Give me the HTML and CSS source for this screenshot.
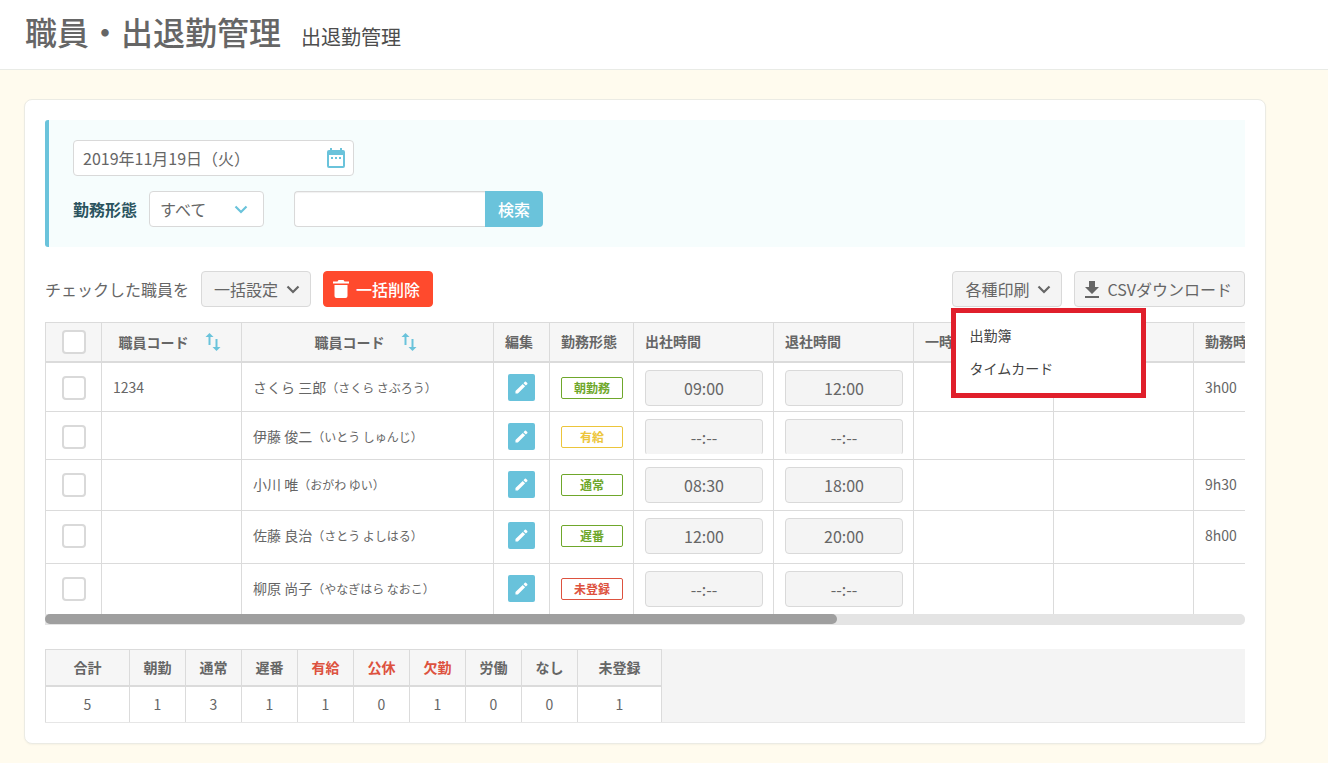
FILE: index.html
```html
<!DOCTYPE html>
<html lang="ja">
<head>
<meta charset="utf-8">
<title>職員・出退勤管理</title>
<link rel="stylesheet" href="styles.css">
</head>
<body>
<svg class="sprite" aria-hidden="true">
  <symbol id="chevron" viewBox="0 0 14 9"><path d="M1.500 1.500l5.500 5.500 5.500-5.500" fill="none" stroke="currentColor" stroke-width="2.200"/></symbol>
  <symbol id="sort" viewBox="0 0 16 20"><path d="M4.500 1L8.500 5H5.500V13H3.500V5H.5zM11.500 19L7.500 15H10.500V7H12.500V15H15.500z" fill="currentColor"/></symbol>
  <symbol id="pencil" viewBox="0 0 14 14"><path d="M0.500 10.900L8.300 3.100L10.900 5.700L3.100 13.500H.5zM9.100 2.300L10.600.8Q11.200.2 11.800.8L13.200 2.200Q13.800 2.800 13.200 3.400L11.700 4.900z" fill="currentColor"/></symbol>
</svg>
<header class="page-header">
  <h1 class="page-title">職員・出退勤管理</h1>
  <p class="page-subtitle">出退勤管理</p>
</header>
<main class="card">
  <form class="filter">
    <div class="date-field">
      <input class="field date-input" type="text" value="2019年11月19日（火）" aria-label="日付">
      <svg class="calendar-icon" viewBox="0 0 18 20"><path d="M3 0h2v2h8V0h2v2h1q2 0 2 2v14q0 2-2 2H2q-2 0-2-2V4q0-2 2-2h1zM2 7v11h14V7zM4 9h2v2H4zm4 0h2v2H8zm4 0h2v2h-2z" fill="currentColor" fill-rule="evenodd"/></svg>
    </div>
    <div class="filter-row">
      <label class="filter-label" for="work-type">勤務形態</label>
      <div class="select-wrap">
        <select class="field work-select" id="work-type"><option>すべて</option></select>
        <svg class="select-icon"><use href="#chevron"/></svg>
      </div>
      <div class="search">
        <input class="field search-input" type="text" aria-label="検索語">
        <button class="search-button" type="button">検索</button>
      </div>
    </div>
  </form>

  <div class="toolbar">
    <span class="toolbar-text">チェックした職員を</span>
    <button class="button" type="button">一括設定<svg class="chevron"><use href="#chevron"/></svg></button>
    <button class="button button-danger" type="button"><svg class="trash" viewBox="0 0 16 18"><path d="M0 1.500h4.500L5.500 0h5l1 1.500H16v2H0zM1.500 5h13v11q0 2-2 2h-9q-2 0-2-2z" fill="currentColor"/></svg>一括削除</button>
    <div class="print">
      <button class="button" type="button" aria-expanded="true">各種印刷<svg class="chevron"><use href="#chevron"/></svg></button>
      <div class="menu">
        <a class="menu-item" href="#attendance">出勤簿</a>
        <a class="menu-item" href="#timecard">タイムカード</a>
      </div>
    </div>
    <button class="button button-csv" type="button"><svg class="download" viewBox="0 0 14 17"><path d="M4 0h6v6h4l-7 7-7-7h4zM0 15h14v2H0z" fill="currentColor"/></svg>CSVダウンロード</button>
  </div>

  <div class="table-scroll">
    <table class="staff">
      <colgroup>
        <col class="w-check"><col class="w-mid"><col class="w-name"><col class="w-edit"><col class="w-type"><col class="w-mid"><col class="w-mid"><col class="w-mid"><col class="w-mid"><col>
      </colgroup>
      <thead>
        <tr>
          <th class="center"><input class="check" type="checkbox" aria-label="すべて選択"></th>
          <th><div class="sortable">職員コード<svg class="sort"><use href="#sort"/></svg></div></th>
          <th><div class="sortable">職員コード<svg class="sort"><use href="#sort"/></svg></div></th>
          <th>編集</th><th>勤務形態</th><th>出社時間</th><th>退社時間</th><th>一時</th><th></th><th>勤務時間</th>
        </tr>
      </thead>
      <tbody>
        <tr class="row">
          <td><div class="cell middle"><input class="check" type="checkbox" aria-label="さくら 三郎を選択"></div></td>
          <td><div class="cell raised">1234</div></td>
          <td><div class="cell raised"><span>さくら 三郎<small class="kana">（さくら さぶろう）</small></span></div></td>
          <td><div class="cell middle raised"><button class="edit" type="button" aria-label="編集"><svg class="pencil"><use href="#pencil"/></svg></button></div></td>
          <td><div class="cell"><span class="badge green">朝勤務</span></div></td>
          <td><div class="cell"><input class="time" type="text" value="09:00" aria-label="出社時間"></div></td>
          <td><div class="cell"><input class="time" type="text" value="12:00" aria-label="退社時間"></div></td>
          <td></td><td></td>
          <td><div class="cell raised">3h00</div></td>
        </tr>
        <tr class="row row-short">
          <td><div class="cell middle"><input class="check" type="checkbox" aria-label="伊藤 俊二を選択"></div></td>
          <td></td>
          <td><div class="cell raised"><span>伊藤 俊二<small class="kana">（いとう しゅんじ）</small></span></div></td>
          <td><div class="cell middle raised"><button class="edit" type="button" aria-label="編集"><svg class="pencil"><use href="#pencil"/></svg></button></div></td>
          <td><div class="cell"><span class="badge yellow">有給</span></div></td>
          <td><div class="cell"><input class="time" type="text" value="--:--" aria-label="出社時間"></div></td>
          <td><div class="cell"><input class="time" type="text" value="--:--" aria-label="退社時間"></div></td>
          <td></td><td></td><td></td>
        </tr>
        <tr class="row row-tall">
          <td><div class="cell middle"><input class="check" type="checkbox" aria-label="小川 唯を選択"></div></td>
          <td></td>
          <td><div class="cell raised"><span>小川 唯<small class="kana">（おがわ ゆい）</small></span></div></td>
          <td><div class="cell middle raised"><button class="edit" type="button" aria-label="編集"><svg class="pencil"><use href="#pencil"/></svg></button></div></td>
          <td><div class="cell"><span class="badge green">通常</span></div></td>
          <td><div class="cell"><input class="time" type="text" value="08:30" aria-label="出社時間"></div></td>
          <td><div class="cell"><input class="time" type="text" value="18:00" aria-label="退社時間"></div></td>
          <td></td><td></td>
          <td><div class="cell raised">9h30</div></td>
        </tr>
        <tr class="row row-taller">
          <td><div class="cell middle"><input class="check" type="checkbox" aria-label="佐藤 良治を選択"></div></td>
          <td></td>
          <td><div class="cell raised"><span>佐藤 良治<small class="kana">（さとう よしはる）</small></span></div></td>
          <td><div class="cell middle raised"><button class="edit" type="button" aria-label="編集"><svg class="pencil"><use href="#pencil"/></svg></button></div></td>
          <td><div class="cell"><span class="badge green">遅番</span></div></td>
          <td><div class="cell"><input class="time" type="text" value="12:00" aria-label="出社時間"></div></td>
          <td><div class="cell"><input class="time" type="text" value="20:00" aria-label="退社時間"></div></td>
          <td></td><td></td>
          <td><div class="cell raised">8h00</div></td>
        </tr>
        <tr class="row row-last">
          <td><div class="cell middle"><input class="check" type="checkbox" aria-label="柳原 尚子を選択"></div></td>
          <td></td>
          <td><div class="cell raised"><span>柳原 尚子<small class="kana">（やなぎはら なおこ）</small></span></div></td>
          <td><div class="cell middle raised"><button class="edit" type="button" aria-label="編集"><svg class="pencil"><use href="#pencil"/></svg></button></div></td>
          <td><div class="cell"><span class="badge red">未登録</span></div></td>
          <td><div class="cell"><input class="time" type="text" value="--:--" aria-label="出社時間"></div></td>
          <td><div class="cell"><input class="time" type="text" value="--:--" aria-label="退社時間"></div></td>
          <td></td><td></td><td></td>
        </tr>
      </tbody>
    </table>
  </div>
  <div class="scroll-track"><div class="scroll-thumb"></div></div>

  <div class="summary-wrap">
    <table class="summary">
      <thead>
        <tr><th class="wide">合計</th><th>朝勤</th><th>通常</th><th>遅番</th><th class="off">有給</th><th class="off">公休</th><th class="off">欠勤</th><th>労働</th><th>なし</th><th class="wide">未登録</th></tr>
      </thead>
      <tbody>
        <tr><td>5</td><td>1</td><td>3</td><td>1</td><td>1</td><td>0</td><td>1</td><td>0</td><td>0</td><td>1</td></tr>
      </tbody>
    </table>
  </div>
</main>
</body>
</html>
```

FILE: styles.css
```css
* { box-sizing: border-box; }

body {
  margin: 0;
  background: #fffbee;
  color: #666;
  font: 14px/20px "Noto Sans CJK JP", sans-serif;
}

button, input, select { font: inherit; color: inherit; margin: 0; }
button { cursor: pointer; }
svg { display: block; flex: none; }
.sprite { position: absolute; width: 0; height: 0; }

.page-header {
  display: flex;
  align-items: baseline;
  gap: 20px;
  padding: 7px 25px 14px;
  background: #fff;
  border-bottom: 1px solid #e9ebe6;
}
.page-title { margin: 0; font-size: 32px; line-height: 48px; font-weight: 500; }
.page-subtitle { margin: 0; font-size: 20px; line-height: 28px; color: #4d4d4d; }

.card {
  margin: 29px 62px 19px 24px;
  padding: 20px;
  background: #fff;
  border: 1px solid #ebebe4;
  border-radius: 8px;
  box-shadow: 0 1px 2px rgba(0, 0, 0, .04);
}

/* Filter panel */
.filter {
  display: flex;
  flex-direction: column;
  gap: 15px;
  padding: 20px 24px;
  background: #f6fdfd;
  border-left: 4px solid #6ac3db;
  border-radius: 3px 0 0 3px;
}
.filter-row { display: flex; align-items: center; }
.field {
  display: block;
  height: 36px;
  background: #fff;
  border: 1px solid #d9d9d9;
  border-radius: 4px;
  font-size: 16px;
}
.date-field { position: relative; width: 281px; }
.date-input { width: 100%; padding: 0 40px 0 9px; }
.calendar-icon { position: absolute; top: 8px; right: 9px; width: 18px; height: 20px; color: #6ac3db; }
.filter-label { margin-right: 12px; font-size: 16px; font-weight: 700; color: #2b545f; }
.select-wrap { position: relative; width: 115px; }
.work-select { width: 100%; padding: 0 32px 0 10px; appearance: none; }
.select-icon { position: absolute; top: 14px; right: 16px; width: 14px; height: 9px; color: #6ac3db; pointer-events: none; }
.search { display: flex; margin-left: 30px; }
.search-input { width: 191px; border-right: 0; border-radius: 4px 0 0 4px; box-shadow: inset 0 1px 1px rgba(0, 0, 0, .06); }
.search-button {
  width: 58px;
  padding: 0;
  background: #6ac3db;
  border: 0;
  border-radius: 0 4px 4px 0;
  color: #fff;
  font-size: 16px;
  font-weight: 500;
}

/* Toolbar */
.toolbar { display: flex; align-items: center; gap: 12px; margin: 24px 0 15px; font-size: 16px; }
.button {
  display: flex;
  align-items: center;
  gap: 8px;
  height: 36px;
  padding: 0 10px 0 12px;
  background: #f4f4f4;
  border: 1px solid #d9d9d9;
  border-radius: 4px;
  white-space: nowrap;
}
.button-danger { gap: 7px; padding: 0 12px 0 9px; background: #ff4a2d; border-color: #ff4a2d; color: #fff; font-weight: 500; }
.button-csv { padding: 0 12px 0 10px; }
.chevron { width: 14px; height: 9px; }
.trash { width: 16px; height: 18px; }
.download { width: 14px; height: 17px; }
.print { position: relative; margin-left: auto; }
.menu {
  position: absolute;
  z-index: 2;
  top: 37px;
  left: -1px;
  width: 195px;
  padding: 6px 13px 8px;
  background: #fff;
  border: 5px solid #e01f2b;
}
.menu-item { display: block; font-size: 14px; line-height: 33px; color: #444; text-decoration: none; }

/* Staff table */
.table-scroll { overflow: hidden; }
table { border-collapse: separate; border-spacing: 0; table-layout: fixed; }
.staff { width: 100%; min-width: 1820px; }
.w-check, .w-edit { width: 56px; }
.w-mid { width: 140px; }
.w-name { width: 252px; }
.w-type { width: 84px; }
th {
  background: #f6f6f6;
  border: solid #dbdbdb;
  border-width: 1px 0 2px 1px;
  font-weight: 700;
}
td { border: solid #dbdbdb; border-width: 0 0 1px 1px; }
.staff th { height: 41px; padding: 0 0 3px 11px; text-align: left; white-space: nowrap; }
.staff td { padding: 7px 0 0 11px; vertical-align: top; }
.staff th.center { padding: 0 0 0 16px; }
.sortable { display: flex; align-items: center; justify-content: center; gap: 16px; padding: 2px 15px 0 0; }
.sort { width: 16px; height: 20px; color: #6ac3db; }
.row { height: 49px; }
.row-short { height: 48px; }
.row-tall { height: 51px; }
.row-taller { height: 53px; }
.row-last { height: 50px; }
.row-last td { border-bottom: 0; }
.cell { display: flex; align-items: center; height: 36px; white-space: nowrap; }
.middle { justify-content: center; padding-right: 11px; }
.raised { padding-bottom: 2px; }
.kana { font-size: 12px; }
.check {
  display: block;
  width: 24px;
  height: 24px;
  appearance: none;
  background: #fff;
  border: 2px solid #d9d9d9;
  border-radius: 4px;
}
.edit {
  display: grid;
  place-items: center;
  width: 27px;
  height: 27px;
  padding: 0;
  background: #68c2db;
  border: 0;
  border-radius: 2px;
  color: #fff;
}
.pencil { width: 13px; height: 13px; }
.badge {
  width: 62px;
  border: 1px solid;
  border-radius: 2px;
  font-size: 12px;
  font-weight: 700;
  text-align: center;
}
.green { color: #6fa72b; }
.yellow { color: #ecc53b; }
.red { color: #dd523f; }
.time {
  width: 118px;
  height: 36px;
  padding: 0;
  background: #f4f4f4;
  border: 1px solid #d9d9d9;
  border-radius: 4px;
  font-size: 16px;
  text-align: center;
}
.row-short .time { border-bottom-color: transparent; background-clip: padding-box; }

.scroll-track { height: 11px; background: #e4e4e4; border-radius: 0 5px 5px 0; }
.scroll-thumb { width: 66%; height: 10px; background: #9f9f9f; border-radius: 5px; }

/* Totals */
.summary-wrap { margin-top: 24px; background: #f4f4f4; border-bottom: 1px solid #e6e6e6; }
.summary { width: 617px; border-right: 1px solid #dbdbdb; text-align: center; }
.summary .wide { width: 84px; }
.summary th { height: 38px; padding: 0 0 2px; }
.summary td { height: 35px; padding: 0 0 2px; background: #fff; border-bottom: 0; }
.off { color: #dd523f; }
```
